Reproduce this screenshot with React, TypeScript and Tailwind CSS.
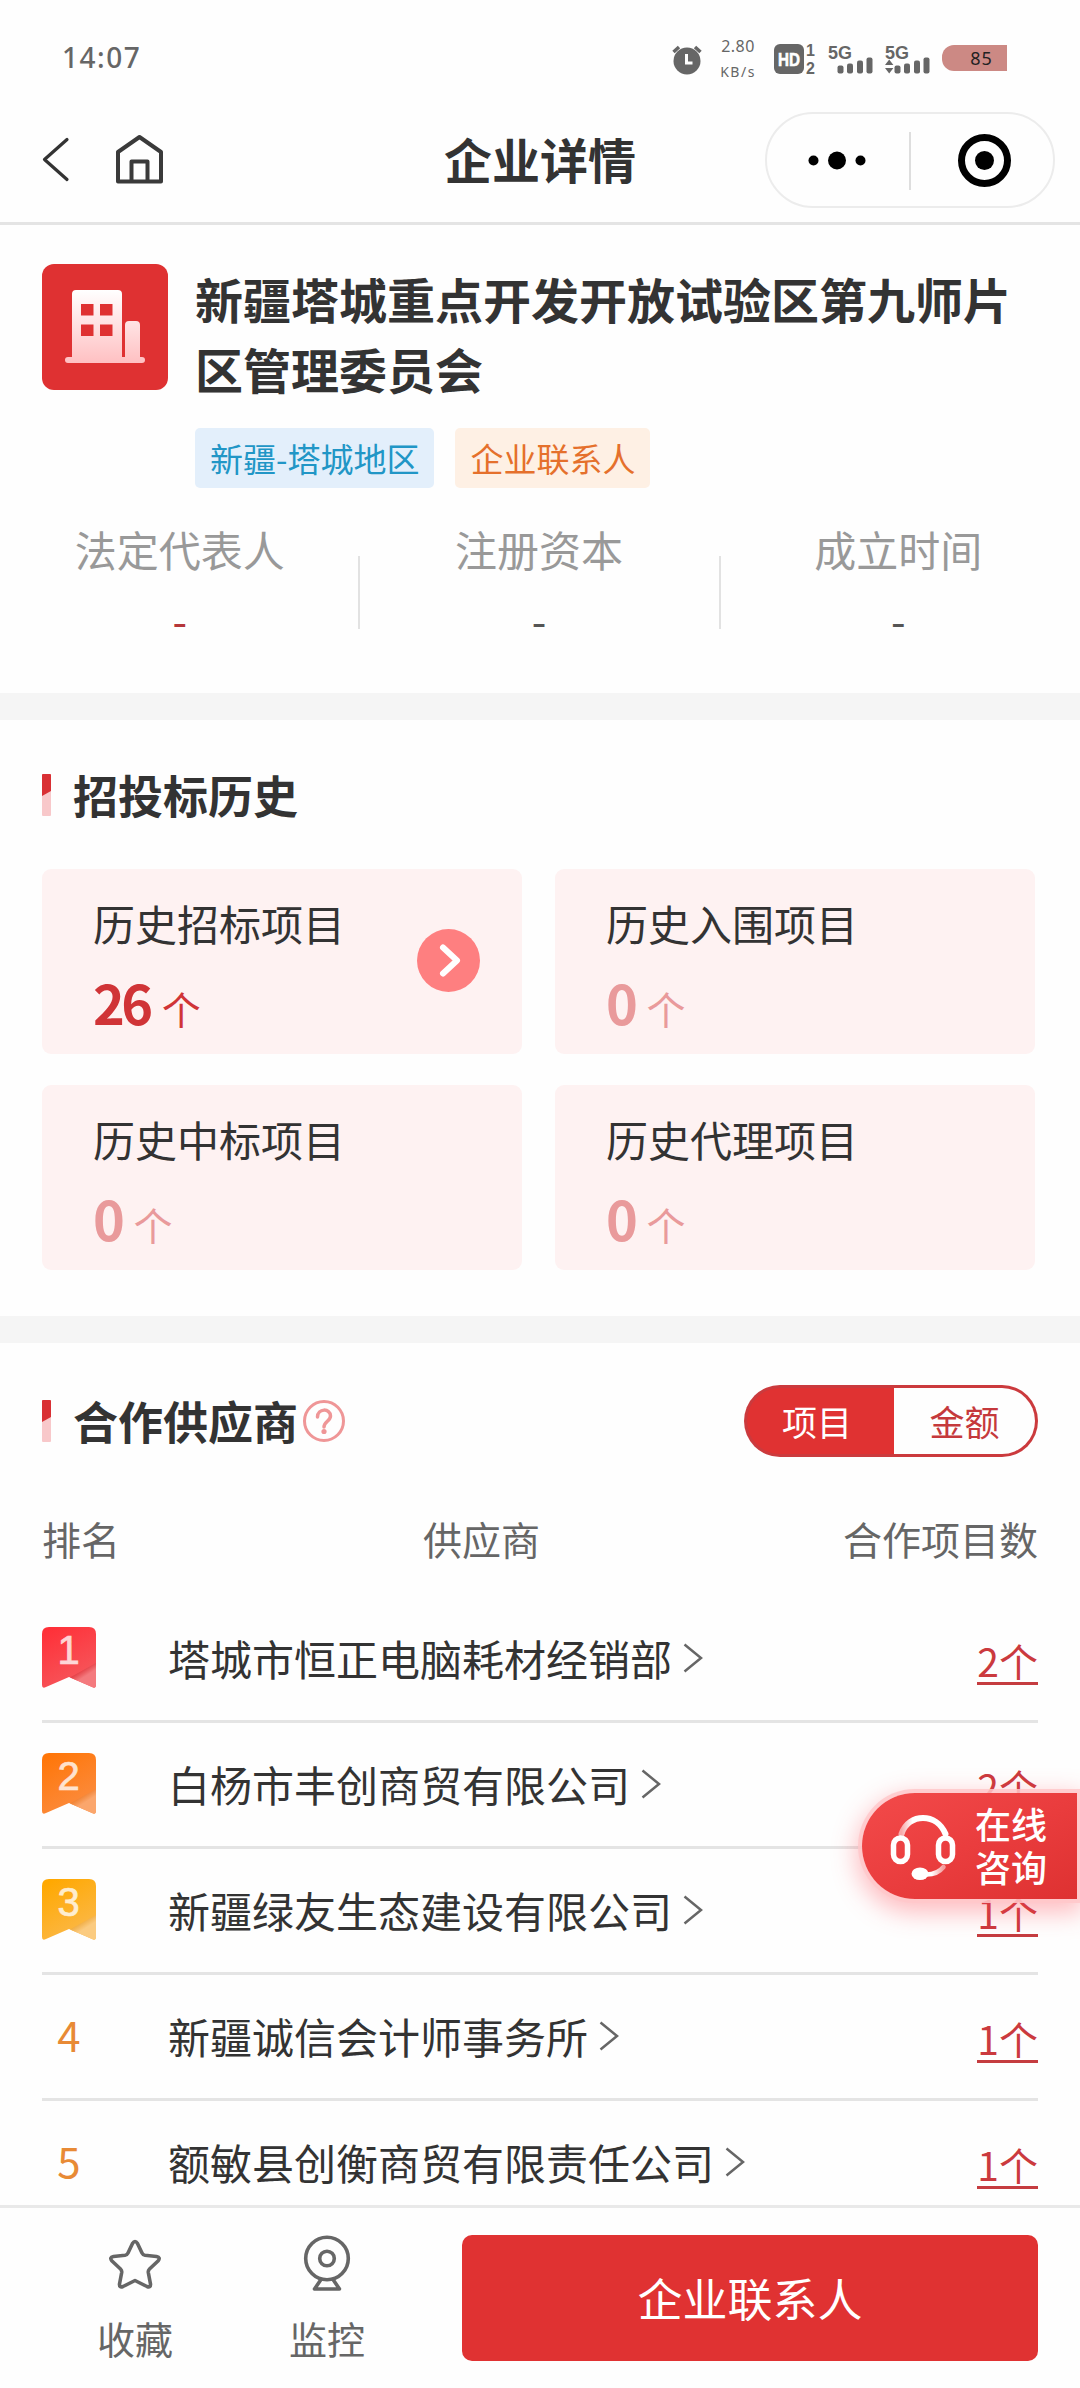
import type { ReactNode } from "react";

const suppliers = [
  { rank: 1, name: "塔城市恒正电脑耗材经销部", count: 2 },
  { rank: 2, name: "白杨市丰创商贸有限公司", count: 2 },
  { rank: 3, name: "新疆绿友生态建设有限公司", count: 1 },
  { rank: 4, name: "新疆诚信会计师事务所", count: 1 },
  { rank: 5, name: "额敏县创衡商贸有限责任公司", count: 1 },
];

const history = [
  { label: "历史招标项目", count: 26 },
  { label: "历史入围项目", count: 0 },
  { label: "历史中标项目", count: 0 },
  { label: "历史代理项目", count: 0 },
];

const badgeColors = [
  { from: "#ff3038", to: "#f5595e", fold: "#f47a7e", edge: "#e02f36" },
  { from: "#ff7608", to: "#fb8d42", fold: "#fba66c", edge: "#ee7a25" },
  { from: "#ffa800", to: "#fbb94c", fold: "#fbcb80", edge: "#eea635" },
];

function Signal({ arrows = false }: { arrows?: boolean }) {
  return (
    <svg className="overflow-visible" width="46" height="30" viewBox="0 0 46 30" fill="#666">
      <text x="0" y="14.500" fontFamily="Liberation Sans, sans-serif" fontSize="19" fontWeight="700" textLength="24" lengthAdjust="spacingAndGlyphs">5G</text>
      {arrows && <path d="M0 21 4.200 15.500 8.400 21zM0 24h8.400L4.200 29.500z" />}
      <rect x="9.500" y="21.500" width="6" height="8" rx="2" />
      <rect x="19" y="19.500" width="6" height="10" rx="2" />
      <rect x="29" y="16.500" width="6" height="13" rx="2" />
      <rect x="38.500" y="13.500" width="6" height="16" rx="2" />
    </svg>
  );
}

function StatusBar() {
  return (
    <div className="h-[96px] flex items-start text-[#666]">
      <span className="ml-[62px] mt-[36px] w-[81px] font-['Noto_Sans',sans-serif] text-[28px] leading-[42px] font-medium tracking-[1.5px]">
        14:07
      </span>
      <svg className="ml-[528px] mt-[44px]" width="32" height="32" viewBox="0 0 32 32">
        <circle cx="16" cy="17" r="13.500" fill="#666" />
        <path d="M2.500 8 8 3M24 3l5.500 5" stroke="#666" strokeWidth="3.500" />
        <path d="M15.500 10v9h6" stroke="#fff" strokeWidth="3" fill="none" />
      </svg>
      <div className="ml-[15px] mt-[34px] w-[40px] flex flex-col items-center font-['Noto_Sans',sans-serif]">
        <span className="text-[16px] leading-[25px] tracking-[0.5px]">2.80</span>
        <span className="text-[14px] leading-[25px] tracking-[1.5px]">KB/s</span>
      </div>
      <svg className="ml-[16px] mt-[44px] overflow-visible" width="44" height="30" viewBox="0 0 44 30">
        <rect x="0" y="0" width="30" height="30" rx="6" fill="#666" />
        <text x="4" y="22" fontFamily="Liberation Sans, sans-serif" fontSize="19" fontWeight="700" fill="#fff" stroke="#fff" strokeWidth="0.600" textLength="22" lengthAdjust="spacingAndGlyphs">HD</text>
        <text x="32" y="12" fontFamily="Liberation Sans, sans-serif" fontSize="16" fontWeight="700" fill="#666">1</text>
        <text x="32" y="29.500" fontFamily="Liberation Sans, sans-serif" fontSize="16" fontWeight="700" fill="#666">2</text>
      </svg>
      <div className="ml-[10px] mt-[44px] flex gap-[11px]">
        <Signal />
        <Signal arrows />
      </div>
      <div className="ml-[11px] mt-[45px] w-[65px] h-[26px] pl-[14px] rounded-l-[12px] bg-[#cc8984] text-[#222] text-center font-['Noto_Sans',sans-serif] text-[18px] leading-[26px] tracking-[1px]">
        85
      </div>
    </div>
  );
}

function NavBar() {
  return (
    <div className="h-[129px] border-b-[3px] border-[#e4e4e4] flex items-start relative">
      <svg className="ml-[40px] mt-[38px]" width="32" height="52" viewBox="0 0 32 52" fill="none" stroke="#333" strokeWidth="3.200" strokeLinecap="round" strokeLinejoin="round">
        <path d="M27 5.500 4.500 25.500 27 45.500" />
      </svg>
      <svg className="ml-[41px] mt-[36px]" width="50" height="54" viewBox="0 0 50 54" fill="none" stroke="#3a3a3a" strokeWidth="4" strokeLinejoin="round">
        <path d="M5 20 26.500 5 48 20v29.500h-43z" />
        <path d="M18.500 49V29.500h16V49" />
      </svg>
      <h1 className="absolute inset-x-0 top-[29px] text-center text-[48px] leading-[66px] font-bold">企业详情</h1>
      <div className="ml-auto mr-[25px] mt-[16px] w-[290px] h-[96px] rounded-full border-2 border-[#ececec] flex items-center">
        <svg width="286" height="92" viewBox="0 0 286 92">
          <circle cx="46.500" cy="46.500" r="5" />
          <circle cx="70" cy="46.500" r="9" />
          <circle cx="93.500" cy="46.500" r="5" />
          <path d="M143 18v58" stroke="#dedede" strokeWidth="2" />
          <circle cx="217.500" cy="46.500" r="23" fill="none" stroke="#000" strokeWidth="7" />
          <circle cx="217.500" cy="46.500" r="9.500" />
        </svg>
      </div>
    </div>
  );
}

function CompanyLogo() {
  return (
    <svg className="shrink-0" width="126" height="126" viewBox="0 0 126 126">
      <defs>
        <linearGradient id="tower" x1="0" y1="0" x2="0" y2="1">
          <stop offset="0" stopColor="#fff" />
          <stop offset="1" stopColor="#ffc0c2" />
        </linearGradient>
      </defs>
      <rect width="126" height="126" rx="12" fill="#df3132" />
      <path
        fill="url(#tower)"
        fillRule="evenodd"
        d="M34 26h42q4 0 4 4v63h3V61q0-4 4-4h7q4 0 4 4v32h2q3 0 3 3t-3 3H26q-3 0-3-3t3-3h4V30q0-4 4-4zM39 40v11.500h12.500V40zM58 40v11.500h12.500V40zM39 60.500V72h12.500V60.500zM58 60.500V72h12.500V60.500z"
      />
    </svg>
  );
}

function SectionTitle({ children }: { children: ReactNode }) {
  return (
    <div className="flex items-center">
      <svg width="9" height="42" viewBox="0 0 9 42">
        <rect width="9" height="42" rx="1" fill="#f8c8ca" />
        <path d="M0 1q0-1 1-1h7q1 0 1 1v16L0 22z" fill="#d93034" />
      </svg>
      <h2 className="ml-[22px] text-[45px] leading-[60px] font-bold">{children}</h2>
    </div>
  );
}

function HistoryCard({ label, count }: { label: string; count: number }) {
  return (
    <div className="h-[185px] rounded-[9px] bg-[#fef2f2] pl-[51px] pr-[42px] flex items-center justify-between">
      <div className="pt-[18px] flex flex-col">
        <span className="text-[42px] leading-[60px]">{label}</span>
        <div className={count > 0 ? "mt-[18px] leading-[62px] text-[#d03437]" : "mt-[18px] leading-[62px] text-[#e99a9b]"}>
          <span className="text-[54px] font-bold tracking-[-3.500px]">{count}</span>
          <span className="ml-[12px] text-[39px]">个</span>
        </div>
      </div>
      {count > 0 && (
        <svg className="mb-[2px]" width="63" height="63" viewBox="0 0 63 63">
          <circle cx="31.500" cy="31.500" r="31.500" fill="#fe7f80" />
          <path d="M26 18.500 40 31.500 26 44.500" fill="none" stroke="#fff" strokeWidth="6" strokeLinecap="round" strokeLinejoin="round" />
        </svg>
      )}
    </div>
  );
}

function RankBadge({ rank }: { rank: number }) {
  const c = badgeColors[rank - 1];
  return (
    <svg width="54" height="61" viewBox="0 0 54 61">
      <defs>
        <linearGradient id={`rank${rank}`} x1="0.200" y1="0" x2="0.700" y2="1">
          <stop offset="0" stopColor={c.from} />
          <stop offset="1" stopColor={c.to} />
        </linearGradient>
        <linearGradient id={`fold${rank}`} x1="0.300" y1="0.300" x2="0.700" y2="0.900">
          <stop offset="0" stopColor={c.edge} />
          <stop offset="0.500" stopColor={c.fold} />
        </linearGradient>
      </defs>
      <path d="M7 0h40q7 0 7 7v51q0 4-4 2L27 50 4 60q-4 2-4-2V7q0-7 7-7z" fill={`url(#rank${rank})`} />
      <path d="M54 36 28 50.500l22 9.500q4 2 4-2z" fill={`url(#fold${rank})`} />
      <text x="26.500" y="37" textAnchor="middle" fontFamily="Liberation Sans, sans-serif" fontSize="40" fill="#fff" stroke="#fff" strokeWidth="0.700" opacity="0.780">{rank}</text>
    </svg>
  );
}

function SupplierRow({ rank, name, count }: { rank: number; name: string; count: number }) {
  return (
    <div className="h-[126px] shrink-0 pb-[2px] border-b-[3px] border-[#e4e4e4] flex items-center">
      <div className="w-[54px] flex justify-center">
        {rank <= 3 ? <RankBadge rank={rank} /> : <span className="mb-[3px] text-[42px] leading-[60px] text-[#e88a35]">{rank}</span>}
      </div>
      <span className="ml-[72px] text-[42px] leading-[60px]">{name}</span>
      <svg className="ml-[10px]" width="22" height="32" viewBox="0 0 22 32" fill="none" stroke="#666" strokeWidth="2.500">
        <path d="M2.500 2.500 19 16 2.500 29.500" />
      </svg>
      <span className="ml-auto mt-[6px] h-[48px] border-b-[3px] border-[#c53c40] text-[39px] leading-[46px] text-[#cb3a3e]">{count}个</span>
    </div>
  );
}

function Headset() {
  return (
    <svg className="ml-[27px] mt-[20px]" width="68" height="70" viewBox="0 0 68 70" fill="none" stroke="#fff" strokeLinecap="round">
      <defs>
        <linearGradient id="band" x1="0" y1="0" x2="1" y2="0">
          <stop offset="0" stopColor="#fff" stopOpacity="0.550" />
          <stop offset="0.250" stopColor="#fff" />
        </linearGradient>
        <linearGradient id="mic" x1="0" y1="0" x2="1" y2="0">
          <stop offset="0.300" stopColor="#fff" />
          <stop offset="1" stopColor="#fff" stopOpacity="0.500" />
        </linearGradient>
      </defs>
      <path d="M12.500 21C16 10 25 5 34 5s18 5 22.500 16" stroke="url(#band)" strokeWidth="6" />
      <rect x="4.500" y="25" width="14" height="23.500" rx="7" strokeWidth="5.500" />
      <rect x="49.500" y="25" width="14" height="23.500" rx="7" strokeWidth="5.500" />
      <path d="M54.500 54c-4 5-9 7.500-17 7.500" stroke="url(#mic)" strokeWidth="4.500" />
      <ellipse cx="31" cy="60.700" rx="8.500" ry="6.300" fill="#fff" stroke="none" />
    </svg>
  );
}

export default function App() {
  return (
    <div className="w-[1080px] h-[2388px] relative overflow-hidden flex flex-col bg-[#fefefe] text-[#333] font-['Noto_Sans_CJK_SC',sans-serif]">
      <StatusBar />
      <NavBar />

      {/* 企业信息 */}
      <section className="h-[468px] shrink-0 pt-[39px]">
        <div className="flex px-[42px] gap-[27px]">
          <CompanyLogo />
          <div className="w-[830px]">
            <h2 className="mt-[-1px] text-[48px] leading-[70px] font-bold">新疆塔城重点开发开放试验区第九师片区管理委员会</h2>
            <div className="mt-[25px] flex gap-[21px] text-[33px] leading-[60px]">
              <span className="px-[15px] rounded-[5px] bg-[#e3effb] text-[#2196c6]">新疆-塔城地区</span>
              <span className="px-[15px] rounded-[5px] bg-[#fef0e4] text-[#e5702c]">企业联系人</span>
            </div>
          </div>
        </div>
        <div className="mt-[31px] mr-[2px] grid grid-cols-3 items-end text-center text-[42px]">
          <div>
            <p className="leading-[60px] text-[#999]">法定代表人</p>
            <p className="mt-[10px] leading-[60px] text-[#b5373a]">-</p>
          </div>
          <div className="relative">
            <p className="leading-[60px] text-[#999]">注册资本</p>
            <p className="mt-[10px] leading-[60px] text-[#555]">-</p>
            <i className="absolute left-[-1px] top-[37px] w-[2px] h-[73px] bg-[#e2e2e2]" />
            <i className="absolute right-[-2px] top-[37px] w-[2px] h-[73px] bg-[#e2e2e2]" />
          </div>
          <div>
            <p className="leading-[60px] text-[#999]">成立时间</p>
            <p className="mt-[10px] leading-[60px] text-[#555]">-</p>
          </div>
        </div>
      </section>
      <div className="h-[27px] shrink-0 bg-[#f5f5f5]" />

      {/* 招投标历史 */}
      <section className="h-[596px] shrink-0 px-[42px] pt-[45px]">
        <SectionTitle>招投标历史</SectionTitle>
        <div className="mt-[44px] w-[993px] grid grid-cols-2 gap-x-[33px] gap-y-[31px]">
          {history.map((item) => (
            <HistoryCard key={item.label} {...item} />
          ))}
        </div>
      </section>
      <div className="h-[27px] shrink-0 bg-[#f5f5f5]" />

      {/* 合作供应商 */}
      <section className="h-[862px] shrink-0 overflow-hidden px-[42px] pt-[42px] flex flex-col">
        <div className="h-[72px] shrink-0 flex items-center justify-between">
          <div className="flex items-center">
            <SectionTitle>合作供应商</SectionTitle>
            <svg className="ml-[4px]" width="44" height="44" viewBox="0 0 44 44" fill="none" stroke="#ef9697" strokeWidth="3">
              <circle cx="22" cy="22" r="19.500" />
              <path d="M15.500 18c0-9 13-9 13-1 0 5-6.500 5.500-6.500 11" strokeWidth="3.500" strokeLinecap="round" />
              <circle cx="22" cy="32.500" r="2.600" fill="#ef9697" stroke="none" />
            </svg>
          </div>
          <div className="w-[294px] h-[72px] rounded-full bg-[#cb3a3d] p-[3px] flex">
            <div className="flex-1 rounded-full overflow-hidden flex text-[35px] leading-[66px] text-center">
              <span className="w-[147px] pr-[7px] bg-[#e03232] text-white">项目</span>
              <span className="flex-1 bg-[#fefefe] text-[#c5393c]">金额</span>
            </div>
          </div>
        </div>
        <div className="mt-[51px] flex justify-between text-[39px] leading-[60px] text-[#666]">
          <span className="w-[195px]">排名</span>
          <span className="mr-[117px]">供应商</span>
          <span>合作项目数</span>
        </div>
        <div className="mt-[29px] flex flex-col">
          {suppliers.map((s) => (
            <SupplierRow key={s.rank} {...s} />
          ))}
        </div>
      </section>

      {/* 在线咨询 */}
      <div className="absolute right-[3px] top-[1793px] w-[215px] h-[106px] rounded-l-full flex bg-gradient-to-br from-[#f34a4a] via-[#ea3d3e] to-[#de3131] shadow-[0_0_0_4px_rgba(255,200,202,0.85),0_8px_24px_6px_rgba(255,70,80,0.35)]">
        <Headset />
        <p className="ml-[18px] mt-[9px] text-[36px] leading-[43px] font-medium text-white">
          在线
          <br />
          咨询
        </p>
      </div>

      {/* 底部操作栏 */}
      <footer className="relative h-[183px] shrink-0 flex items-start border-t-[3px] border-[#e9e9e9] bg-[#fefefe] text-[38px] leading-[54px] text-[#666]">
        <div className="ml-[84px] mt-[26px] w-[102px] flex flex-col items-center">
          <svg width="56" height="60" viewBox="0 0 56 60" fill="none" stroke="#666" strokeWidth="3.600" strokeLinejoin="round">
            <path d="M25.500 9.500q2.500-4 5 0l4.500 9.500q1 2 3 2.300l11.500 1.200q4.500 1 1.500 4.500L42.500 35q-1.500 1.500-1.200 3.500L43.500 50q.3 4-3.500 2.500L28 46.500 16 52.500q-3.800 1.500-3.500-2.500l2.200-11.500q.3-2-1.200-3.500L5 27q-3-3.500 1.500-4.500L18 21.300q2-.3 3-2.300z" />
          </svg>
          <span className="mt-[17px]">收藏</span>
        </div>
        <div className="ml-[90px] mt-[26px] w-[102px] flex flex-col items-center">
          <svg width="50" height="60" viewBox="0 0 50 60" fill="none" stroke="#666" strokeWidth="3.600" strokeLinejoin="round">
            <circle cx="25" cy="24.500" r="21.300" />
            <circle cx="25" cy="24.500" r="7.300" />
            <path d="M19 45.500 12.500 55h25L31 45.500" />
          </svg>
          <span className="mt-[17px]">监控</span>
        </div>
        <button className="ml-auto mr-[42px] mt-[27px] w-[576px] h-[126px] rounded-[10px] bg-[#e03232] text-[45px] text-white">企业联系人</button>
      </footer>
    </div>
  );
}
